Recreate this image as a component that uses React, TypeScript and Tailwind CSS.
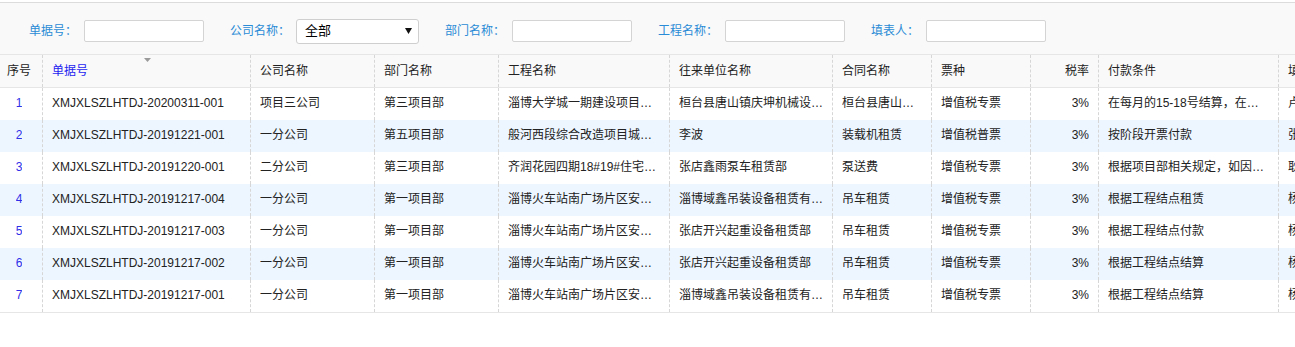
const font = "font-['Liberation_Sans','Noto_Sans_CJK_SC',sans-serif]";

const columns = [
  { key: "no", title: "序号", width: "w-[43px]", pad: "justify-center pr-[4px]" },
  { key: "code", title: "单据号", width: "w-[208px]", pad: "px-[9px]" },
  { key: "company", title: "公司名称", width: "w-[124px]", pad: "px-[9px]" },
  { key: "dept", title: "部门名称", width: "w-[124px]", pad: "px-[9px]" },
  { key: "project", title: "工程名称", width: "w-[171px]", pad: "px-[9px]" },
  { key: "partner", title: "往来单位名称", width: "w-[163px]", pad: "pl-[9px] pr-[6px]" },
  { key: "contract", title: "合同名称", width: "w-[99px]", pad: "px-[9px]" },
  { key: "invoice", title: "票种", width: "w-[99px]", pad: "px-[9px]" },
  { key: "rate", title: "税率", width: "w-[68px]", pad: "justify-end pr-[9px]" },
  { key: "terms", title: "付款条件", width: "w-[180px]", pad: "px-[9px]" },
  { key: "filler", title: "填表人", width: "w-[120px]", pad: "px-[9px]" },
] as const;

type Row = Record<(typeof columns)[number]["key"], string>;

const rows: Row[] = [
  {
    no: "1",
    code: "XMJXLSZLHTDJ-20200311-001",
    company: "项目三公司",
    dept: "第三项目部",
    project: "淄博大学城一期建设项目工程",
    partner: "桓台县唐山镇庆坤机械设备租赁站",
    contract: "桓台县唐山镇庆坤机械租赁",
    invoice: "增值税专票",
    rate: "3%",
    terms: "在每月的15-18号结算，在次月付款",
    filler: "卢建华",
  },
  {
    no: "2",
    code: "XMJXLSZLHTDJ-20191221-001",
    company: "一分公司",
    dept: "第五项目部",
    project: "般河西段综合改造项目城市道路工程",
    partner: "李波",
    contract: "装载机租赁",
    invoice: "增值税普票",
    rate: "3%",
    terms: "按阶段开票付款",
    filler: "张晓明",
  },
  {
    no: "3",
    code: "XMJXLSZLHTDJ-20191220-001",
    company: "二分公司",
    dept: "第三项目部",
    project: "齐润花园四期18#19#住宅楼工程",
    partner: "张店鑫雨泵车租赁部",
    contract: "泵送费",
    invoice: "增值税专票",
    rate: "3%",
    terms: "根据项目部相关规定，如因质量问题扣款",
    filler: "耿立新",
  },
  {
    no: "4",
    code: "XMJXLSZLHTDJ-20191217-004",
    company: "一分公司",
    dept: "第一项目部",
    project: "淄博火车站南广场片区安置房工程",
    partner: "淄博域鑫吊装设备租赁有限公司",
    contract: "吊车租赁",
    invoice: "增值税专票",
    rate: "3%",
    terms: "根据工程结点租赁",
    filler: "杨光",
  },
  {
    no: "5",
    code: "XMJXLSZLHTDJ-20191217-003",
    company: "一分公司",
    dept: "第一项目部",
    project: "淄博火车站南广场片区安置房工程",
    partner: "张店开兴起重设备租赁部",
    contract: "吊车租赁",
    invoice: "增值税专票",
    rate: "3%",
    terms: "根据工程结点付款",
    filler: "杨光",
  },
  {
    no: "6",
    code: "XMJXLSZLHTDJ-20191217-002",
    company: "一分公司",
    dept: "第一项目部",
    project: "淄博火车站南广场片区安置房工程",
    partner: "张店开兴起重设备租赁部",
    contract: "吊车租赁",
    invoice: "增值税专票",
    rate: "3%",
    terms: "根据工程结点结算",
    filler: "杨光",
  },
  {
    no: "7",
    code: "XMJXLSZLHTDJ-20191217-001",
    company: "一分公司",
    dept: "第一项目部",
    project: "淄博火车站南广场片区安置房工程",
    partner: "淄博域鑫吊装设备租赁有限公司",
    contract: "吊车租赁",
    invoice: "增值税专票",
    rate: "3%",
    terms: "根据工程结点结算",
    filler: "杨光",
  },
];

function FilterField({ label, children }: { label: string; children: React.ReactNode }) {
  return (
    <div className="flex items-center">
      <span className="mr-[7px] text-[12px] text-[#2a8bd6]">{label}</span>
      {children}
    </div>
  );
}

function TextInput() {
  return <div className="h-[22px] w-[120px] rounded-[2px] border border-[#d4d4d4] bg-white" />;
}

function FilterBar() {
  return (
    <div className="flex h-[51px] items-center gap-[26px] bg-[#f9f9f9] pl-[29px] pt-[5px]">
      <FilterField label="单据号：">
        <TextInput />
      </FilterField>
      <FilterField label="公司名称：">
        <div className="-ml-px flex h-[25px] w-[123px] items-center justify-between rounded-[3px] border border-[#cfcfcf] bg-white pl-[8px] pr-[6px]">
          <span className="text-[13px] text-black">全部</span>
          <svg width="7" height="6" viewBox="0 0 7 6">
            <path d="M0 0h7L3.5 6z" fill="#111" />
          </svg>
        </div>
      </FilterField>
      <FilterField label="部门名称：">
        <TextInput />
      </FilterField>
      <FilterField label="工程名称：">
        <TextInput />
      </FilterField>
      <FilterField label="填表人：">
        <TextInput />
      </FilterField>
    </div>
  );
}

export default function App() {
  return (
    <div className={`w-[1295px] overflow-hidden bg-white pt-[2px] ${font}`}>
      <div className="border-t border-[#dcdcdc]">
        <FilterBar />
      </div>

      <div className="w-max border-y border-[#e6e6e6]">
        {/* header */}
        <div className="flex h-[33px] border-b border-[#e6e6e6] bg-[#f9f9f9]">
          {columns.map((col) => (
            <div
              key={col.key}
              className={`relative flex shrink-0 items-center border-r border-dashed border-[#d6d6d6] text-[12px] ${col.width} ${col.pad} ${col.key === "code" ? "text-[#1d1df0]" : "text-[#222]"}`}
            >
              {col.key === "code" && (
                <svg
                  className="absolute left-[101px] top-[3px]"
                  width="7"
                  height="4"
                  viewBox="0 0 7 4"
                >
                  <path d="M0 0h7L3.5 4z" fill="#9a9a9a" />
                </svg>
              )}
              {col.title}
            </div>
          ))}
        </div>

        {/* body */}
        {rows.map((row, i) => (
          <div
            key={row.no + row.code}
            className={`flex h-[32px] pb-[2px] ${i % 2 === 1 ? "bg-[#edf6ff]" : "bg-white"}`}
          >
            {columns.map((col) => (
              <div
                key={col.key}
                className={`-mb-[2px] flex shrink-0 items-center overflow-hidden border-r border-dashed border-[#d6d6d6] pb-[2px] text-[12px] ${col.width} ${col.pad} ${col.key === "no" ? "text-[#2f2fe8]" : "text-[#222]"}`}
              >
                <span className="block overflow-hidden text-ellipsis whitespace-nowrap">{row[col.key]}</span>
              </div>
            ))}
          </div>
        ))}
      </div>
    </div>
  );
}
